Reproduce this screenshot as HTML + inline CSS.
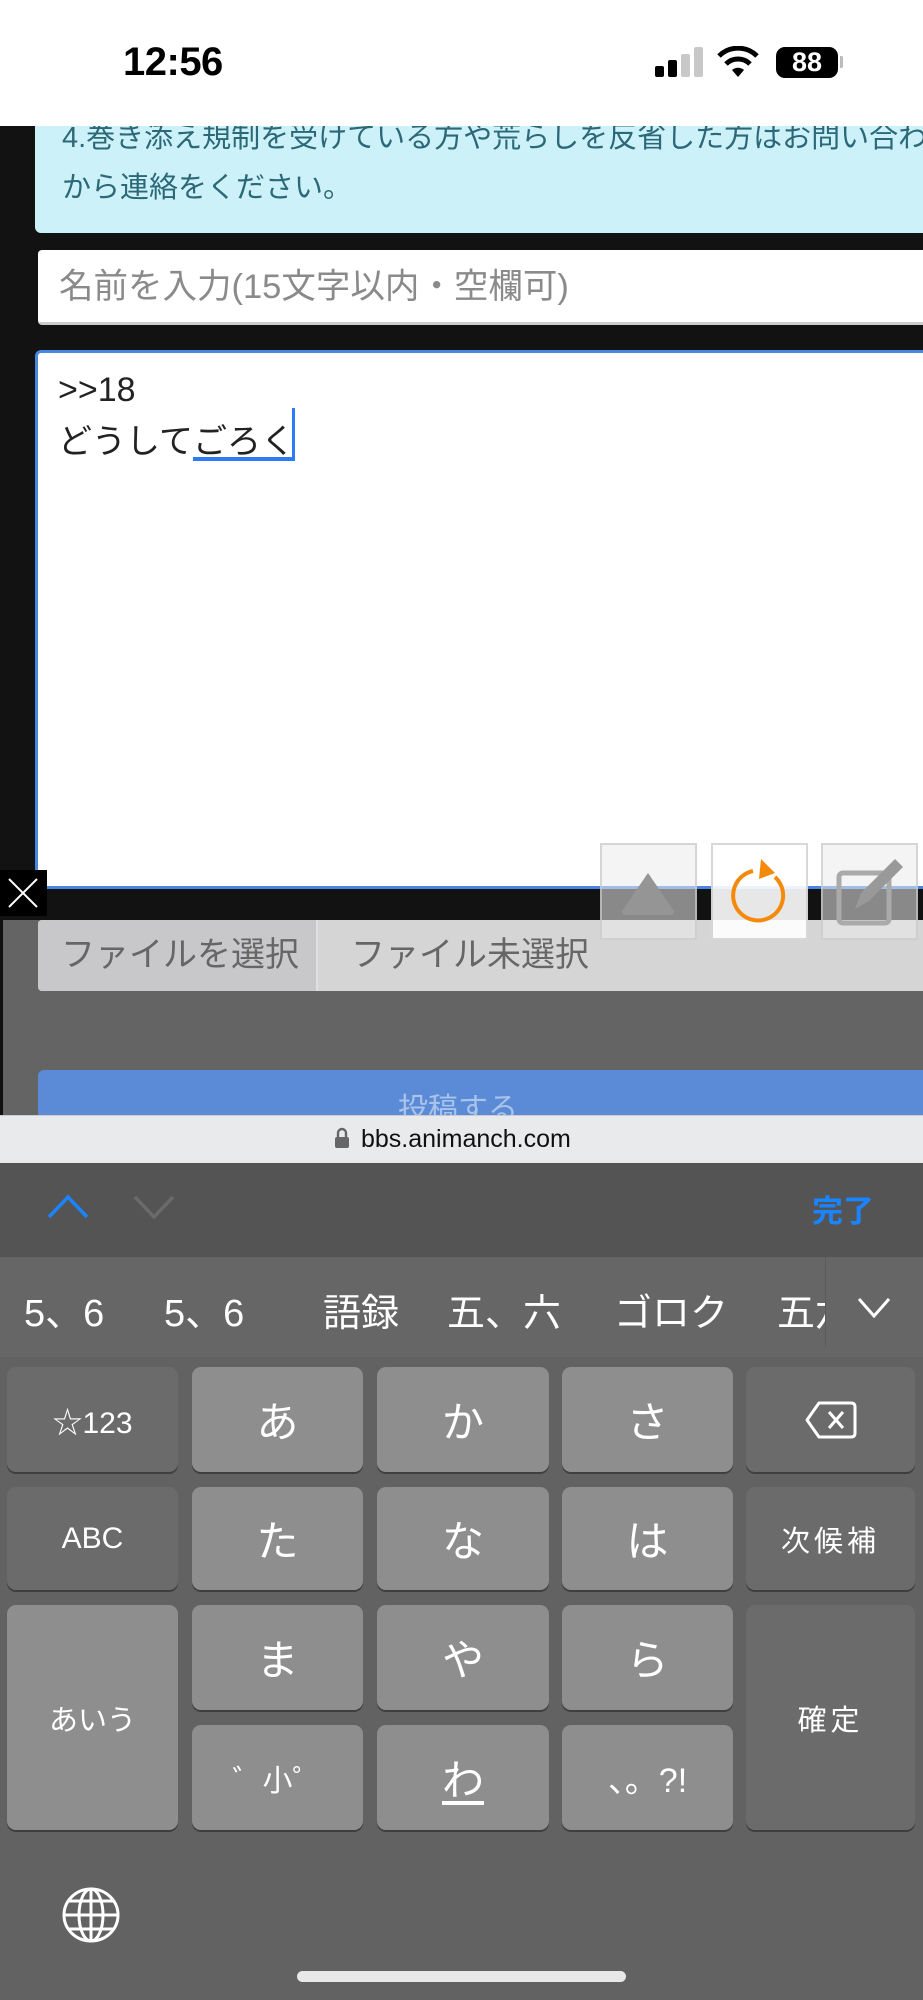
<!DOCTYPE html>
<html><head><meta charset="utf-8"><style>
*{margin:0;padding:0;box-sizing:border-box}
body{width:923px;height:2000px;position:relative;overflow:hidden;background:#626262;font-family:"Liberation Sans","Noto Sans CJK JP",sans-serif}
.a{position:absolute}
.key{position:absolute;border-radius:9px;color:#fff;display:flex;align-items:center;justify-content:center;box-shadow:0 2px 0 #3f3f3f}
.l{background:#8e8e8e;font-size:42px}
.d{background:#6b6b6b;font-size:29px}
.cand{position:absolute;top:1290px;color:#fff;font-size:38px;line-height:48px}
</style></head><body>
<div class="a" style="left:0;top:0;width:923px;height:1115px;background:#121212"></div>
<div class="a" style="left:0;top:920px;width:923px;height:195px;background:#646464"></div>
<div class="a" style="left:0;top:920px;width:3px;height:195px;background:#111"></div>
<div class="a" style="left:35px;top:120px;width:900px;height:113px;background:#cdf1f8;border-radius:6px"></div>
<div class="a" style="left:62px;top:113px;width:900px;color:#2b6878;font-size:29px;line-height:50px;white-space:nowrap">4.巻き添え規制を受けている方や荒らしを反省した方はお問い合わせ<br>から連絡をください。</div>
<div class="a" style="left:0;top:0;width:923px;height:126px;background:#fff"></div>
<div class="a" style="left:123px;top:40px;font-size:40px;font-weight:bold;color:#000;letter-spacing:-0.5px">12:56</div>
<div class="a" style="left:655px;top:66px;width:9px;height:11px;background:#000;border-radius:2px"></div>
<div class="a" style="left:668px;top:60px;width:9px;height:17px;background:#000;border-radius:2px"></div>
<div class="a" style="left:681px;top:54px;width:9px;height:23px;background:#c8c8c8;border-radius:2px"></div>
<div class="a" style="left:694px;top:47px;width:9px;height:30px;background:#c8c8c8;border-radius:2px"></div>
<svg class="a" style="left:716px;top:46px" width="44" height="32" viewBox="0 0 44 32"><path d="M22 31 L16 24 A9 9 0 0 1 28 24 Z" fill="#000"/><path d="M10 18 A17 17 0 0 1 34 18" stroke="#000" stroke-width="5" fill="none"/><path d="M3 10 A27 27 0 0 1 41 10" stroke="#000" stroke-width="5" fill="none"/></svg>
<div class="a" style="left:776px;top:47px;width:62px;height:31px;background:#000;border-radius:9px;color:#fff;font-weight:bold;font-size:27px;line-height:31px;text-align:center">88</div>
<div class="a" style="left:840px;top:56px;width:3px;height:12px;background:#bbb;border-radius:0 2px 2px 0"></div>
<div class="a" style="left:38px;top:250px;width:900px;height:75px;background:#fff;border-radius:4px;border-bottom:3px solid #ccc"></div>
<div class="a" style="left:59px;top:265px;color:#8a8a8a;font-size:34.5px;line-height:44px;white-space:nowrap">名前を入力(15文字以内・空欄可)</div>
<div class="a" style="left:35px;top:350px;width:900px;height:539px;background:#fff;border:3px solid #4a86e0;border-right:none;border-radius:6px 0 0 0"></div>
<div class="a" style="left:58px;top:364px;color:#222;font-size:34px;line-height:52px;white-space:nowrap">&gt;&gt;18<br>どうして<span style="text-decoration:underline;text-decoration-color:#2d7cf6;text-decoration-thickness:4px;text-underline-offset:4px">ごろく</span></div>
<div class="a" style="left:292px;top:408px;width:3px;height:52px;background:#2d7cf6"></div>
<div class="a" style="left:0;top:870px;width:47px;height:46px;background:#000"></div>
<svg class="a" style="left:6px;top:876px" width="34" height="34"><path d="M3 3 L31 31 M31 3 L3 31" stroke="#fff" stroke-width="2"/></svg>
<div class="a" style="left:38px;top:920px;width:900px;height:71px;background:#d5d5d5;border-radius:4px"></div>
<div class="a" style="left:38px;top:920px;width:280px;height:71px;background:#c8c8ca;border-right:2px solid #e0e0e0;border-radius:4px 0 0 4px"></div>
<div class="a" style="left:61px;top:933px;color:#666;font-size:34px;line-height:44px">ファイルを選択</div>
<div class="a" style="left:351px;top:933px;color:#666;font-size:34px;line-height:44px">ファイル未選択</div>
<div class="a" style="left:600px;top:843px;width:97px;height:97px;background:rgba(235,235,235,0.55);border:2px solid rgba(200,200,200,0.7)"></div>
<svg class="a" style="left:600px;top:843px" width="97" height="97"><path d="M22 68 L48 30 L74 68 Q74 72 70 72 L26 72 Q22 72 22 68 Z" fill="#959595"/></svg>
<div class="a" style="left:711px;top:843px;width:97px;height:97px;background:rgba(255,255,255,0.9);border:2px solid rgba(200,200,200,0.7)"></div>
<svg class="a" style="left:711px;top:843px" width="97" height="97"><path d="M42 28 A25 25 0 1 0 64 34" stroke="#f58a0a" stroke-width="4" fill="none"/><path d="M50 16 L64 30 L48 36 Z" fill="#f58a0a"/></svg>
<div class="a" style="left:821px;top:843px;width:97px;height:97px;background:rgba(235,235,235,0.55);border:2px solid rgba(200,200,200,0.7)"></div>
<svg class="a" style="left:821px;top:843px" width="97" height="97"><rect x="18" y="30" width="50" height="50" rx="4" stroke="#aaa" stroke-width="5" fill="none"/><path d="M34 66 L40 50 L74 16 L82 24 L48 58 Z" fill="#999"/></svg>
<div class="a" style="left:38px;top:1070px;width:900px;height:60px;background:#5b8bd6;border-radius:6px;color:#a9c3ea;font-size:30px;text-align:center;padding-top:14px;padding-right:60px">投稿する</div>
<div class="a" style="left:0;top:1115px;width:923px;height:48px;background:#e9eaec;border-top:1px solid #ccc"></div>
<svg class="a" style="left:334px;top:1127px" width="16" height="22"><path d="M4 10 V6 A4 4 0 0 1 12 6 V10" stroke="#666" stroke-width="2.4" fill="none"/><rect x="1" y="10" width="14" height="11" rx="2" fill="#666"/></svg>
<div class="a" style="left:361px;top:1123px;color:#111;font-size:25px;line-height:32px">bbs.animanch.com</div>
<div class="a" style="left:0;top:1163px;width:923px;height:94px;background:#545454"></div>
<svg class="a" style="left:46px;top:1193px" width="44" height="28"><path d="M3 24 L22 4 L41 24" stroke="#1a84ff" stroke-width="3.5" fill="none"/></svg>
<svg class="a" style="left:132px;top:1193px" width="44" height="28"><path d="M3 4 L22 24 L41 4" stroke="#6a6a6a" stroke-width="3.5" fill="none"/></svg>
<div class="a" style="left:812px;top:1190px;color:#1a84ff;font-size:31px;line-height:44px;font-weight:bold">完了</div>
<div class="a" style="left:0;top:1257px;width:923px;height:100px;background:#666"></div>
<div class="cand" style="left:24px">5、6</div>
<div class="cand" style="left:164px">5、6</div>
<div class="cand" style="left:323px">語録</div>
<div class="cand" style="left:447px">五、六</div>
<div class="cand" style="left:614px">ゴロク</div>
<div class="cand" style="left:777px;width:48px;overflow:hidden;white-space:nowrap">五六</div>
<div class="a" style="left:825px;top:1257px;width:1px;height:90px;background:#5a5a5a"></div>
<svg class="a" style="left:856px;top:1296px" width="36" height="24"><path d="M3 3 L18 20 L33 3" stroke="#fff" stroke-width="3" fill="none"/></svg>
<div class="key d" style="left:7px;top:1367px;width:171px;height:105px;font-size:30px">☆123</div>
<div class="key l" style="left:192px;top:1367px;width:171px;height:105px">あ</div>
<div class="key l" style="left:377px;top:1367px;width:172px;height:105px">か</div>
<div class="key l" style="left:562px;top:1367px;width:171px;height:105px">さ</div>
<div class="key d" style="left:746px;top:1367px;width:169px;height:105px"><svg width="52" height="40"><path d="M14 3 H46 Q50 3 50 7 V33 Q50 37 46 37 H14 L2 20 Z" stroke="#fff" stroke-width="3" fill="none" stroke-linejoin="round"/><path d="M24 12 L38 28 M38 12 L24 28" stroke="#fff" stroke-width="3"/></svg></div>
<div class="key d" style="left:7px;top:1487px;width:171px;height:103px;font-size:30px">ABC</div>
<div class="key l" style="left:192px;top:1487px;width:171px;height:103px">た</div>
<div class="key l" style="left:377px;top:1487px;width:172px;height:103px">な</div>
<div class="key l" style="left:562px;top:1487px;width:171px;height:103px">は</div>
<div class="key d" style="left:746px;top:1487px;width:169px;height:103px;letter-spacing:4px">次候補</div>
<div class="key l" style="left:7px;top:1605px;width:171px;height:225px;font-size:29px">あいう</div>
<div class="key l" style="left:192px;top:1605px;width:171px;height:105px">ま</div>
<div class="key l" style="left:377px;top:1605px;width:172px;height:105px">や</div>
<div class="key l" style="left:562px;top:1605px;width:171px;height:105px">ら</div>
<div class="key d" style="left:746px;top:1605px;width:169px;height:225px;letter-spacing:4px">確定</div>
<div class="key l" style="left:192px;top:1725px;width:171px;height:105px;font-size:30px">゛小゜</div>
<div class="key l" style="left:377px;top:1725px;width:172px;height:105px"><span style="text-decoration:underline;text-underline-offset:6px">わ</span></div>
<div class="key l" style="left:562px;top:1725px;width:171px;height:105px;font-size:34px">、。?!</div>
<svg class="a" style="left:61px;top:1886px" width="60" height="58" viewBox="0 0 60 58"><ellipse cx="30" cy="29" rx="27" ry="26" stroke="#fff" stroke-width="3" fill="none"/><ellipse cx="30" cy="29" rx="12" ry="26" stroke="#fff" stroke-width="3" fill="none"/><path d="M30 3 V55 M3 29 H57 M8 15 H52 M8 43 H52" stroke="#fff" stroke-width="3"/></svg>
<div class="a" style="left:297px;top:1971px;width:329px;height:11px;background:#e8e8e8;border-radius:6px"></div>
</body></html>
